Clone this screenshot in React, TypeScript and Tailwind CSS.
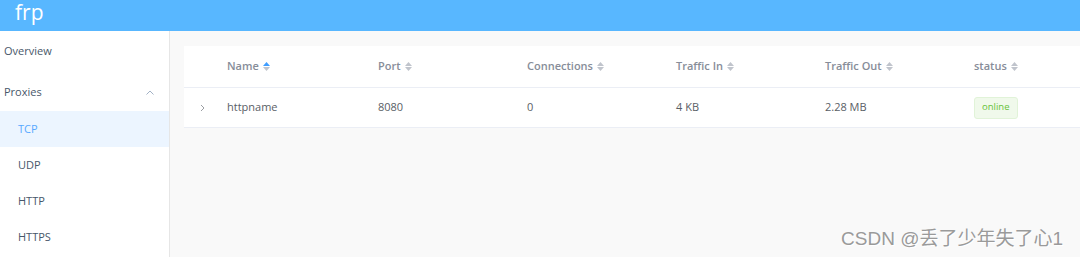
import React from 'react';

const font = { fontFamily: '"Open Sans", "Noto Sans", "Noto Sans CJK SC", sans-serif' };

const SortCaret = ({ active }: { active?: boolean }) => (
  <span className="inline-flex flex-col ml-[4px] gap-[1px] align-middle">
    <svg width="7" height="4" viewBox="0 0 7 4">
      <path d="M0 4 L3.5 0 L7 4 Z" fill={active ? '#409eff' : '#c0c4cc'} />
    </svg>
    <svg width="7" height="4" viewBox="0 0 7 4">
      <path d="M0 0 L3.5 4 L7 0 Z" fill="#c0c4cc" />
    </svg>
  </span>
);

const columns = ['Name', 'Port', 'Connections', 'Traffic In', 'Traffic Out', 'status'];
const cell = (i: number) => (i === 0 ? 'w-[151px]' : 'w-[149px]') + ' shrink-0 pl-[12px]';

const App: React.FC = () => {
  return (
    <div className="relative w-[1080px] h-[257px] overflow-hidden bg-[#f9f9f9]" style={font}>
      <div className="h-[31px] bg-[#58b7ff] flex items-center px-[15px]">
        <span className="text-white text-[21px] leading-none -mt-[6px]">frp</span>
      </div>
      <div className="flex h-[226px]">
        <aside className="w-[170px] shrink-0 bg-white border-r border-[#e6e6e6] text-[11px] text-[#48576a]">
          <div className="h-[40px] flex items-center px-[4px] pt-[1px]">Overview</div>
          <div className="h-[40px] flex items-center justify-between px-[4px] pr-[15px] pt-[2px]">
            <span>Proxies</span>
            <svg width="8" height="5" viewBox="0 0 8 5">
              <path d="M0.5 4.5 L4 1 L7.5 4.5" fill="none" stroke="#97a8be" strokeWidth="0.9" />
            </svg>
          </div>
          <div className="h-[36px] flex items-center pl-[18px] pt-[1px] bg-[#ecf5ff] text-[#58a9ff]">TCP</div>
          <div className="h-[36px] flex items-center pl-[18px] pt-[1px]">UDP</div>
          <div className="h-[36px] flex items-center pl-[18px] pt-[1px]">HTTP</div>
          <div className="h-[36px] flex items-center pl-[18px] pt-[1px]">HTTPS</div>
        </aside>
        <main className="flex-1 pl-[14px] pt-[15px] overflow-hidden">
          <div className="bg-white w-[930px]">
            <div className="flex h-[42px] items-center border-b border-[#ebeef5] text-[11px] font-semibold text-[#878d99]">
              <div className="w-[31px] shrink-0" />
              {columns.map((c, i) => (
                <div key={c} className={cell(i) + ' flex items-center'}>
                  <span>{c}</span>
                  <SortCaret active={i === 0} />
                </div>
              ))}
            </div>
            <div className="flex h-[40px] items-center border-b border-[#ebeef5] text-[11px] text-[#5a5e66]">
              <div className="w-[31px] shrink-0 flex justify-end pr-[10px]">
                <svg width="5" height="8" viewBox="0 0 5 8">
                  <path d="M1 1 L4 4 L1 7" fill="none" stroke="#909399" strokeWidth="0.9" />
                </svg>
              </div>
              <div className={cell(0)}>httpname</div>
              <div className={cell(1)}>8080</div>
              <div className={cell(2)}>0</div>
              <div className={cell(3)}>4 KB</div>
              <div className={cell(4)}>2.28 MB</div>
              <div className={cell(5)}>
                <span className="inline-flex items-center h-[22px] px-[7px] rounded-[3px] bg-[#f0f9eb] border border-[#e1f3d8] text-[#67c23a] text-[9.5px]">
                  online
                </span>
              </div>
            </div>
          </div>
        </main>
      </div>
      <div
        className="absolute right-[17px] bottom-[9px] text-[19px] leading-none text-[#9a9a9a]"
        style={{ fontFamily: '"Liberation Sans", "Noto Sans CJK SC", sans-serif', textShadow: '1px 1px 0 #fff' }}
      >
        CSDN @丢了少年失了心1
      </div>
    </div>
  );
};

export default App;
